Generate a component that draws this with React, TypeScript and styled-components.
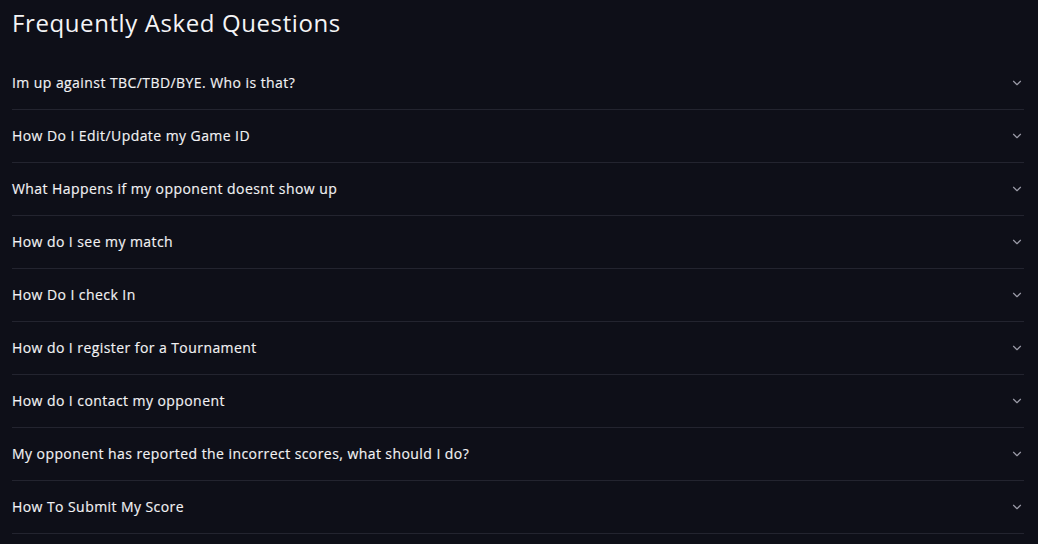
import React from "react";
import styled, { createGlobalStyle } from "styled-components";

const Global = createGlobalStyle`
  html, body { margin: 0; padding: 0; background: #0e0f18; }
  body { font-family: "Open Sans", "Noto Sans", sans-serif; color: #f2f2f4; }
`;

const Page = styled.div`
  padding: 6px 14px 0 12px;
  min-height: 544px;
  box-sizing: border-box;
  background: #0e0f18;
`;

const Title = styled.h1`
  margin: 0 0 18px 0;
  font-size: 24px;
  line-height: 33px;
  font-weight: 500;
  color: #f4f4f6;
  letter-spacing: 0.6px;
`;

const List = styled.div`
  display: flex;
  flex-direction: column;
`;

const Row = styled.div`
  display: flex;
  align-items: center;
  justify-content: space-between;
  height: 53px;
  padding-bottom: 2px;
  box-sizing: border-box;
  border-bottom: 1px solid #23242f;
`;

const Question = styled.span`
  font-size: 14px;
  font-weight: 500;
  color: #f2f2f4;
  letter-spacing: 0.43px;
  -webkit-text-stroke: 0.15px #f2f2f4;
`;

const Chevron = styled.svg`
  width: 14px;
  height: 14px;
  margin-top: 2px;
  color: #9a9aa6;
  flex-shrink: 0;
`;

const questions = [
  "Im up against TBC/TBD/BYE. Who is that?",
  "How Do I Edit/Update my Game ID",
  "What Happens if my opponent doesnt show up",
  "How do I see my match",
  "How Do I check In",
  "How do I register for a Tournament",
  "How do I contact my opponent",
  "My opponent has reported the incorrect scores, what should I do?",
  "How To Submit My Score",
];

export default function App() {
  return (
    <>
      <Global />
      <Page>
        <Title>Frequently Asked Questions</Title>
        <List>
          {questions.map((q) => (
            <Row key={q}>
              <Question>{q}</Question>
              <Chevron viewBox="0 0 24 24" fill="none" stroke="currentColor" strokeWidth="2" strokeLinecap="round" strokeLinejoin="round">
                <path d="m6 9 6 6 6-6" />
              </Chevron>
            </Row>
          ))}
        </List>
      </Page>
    </>
  );
}
